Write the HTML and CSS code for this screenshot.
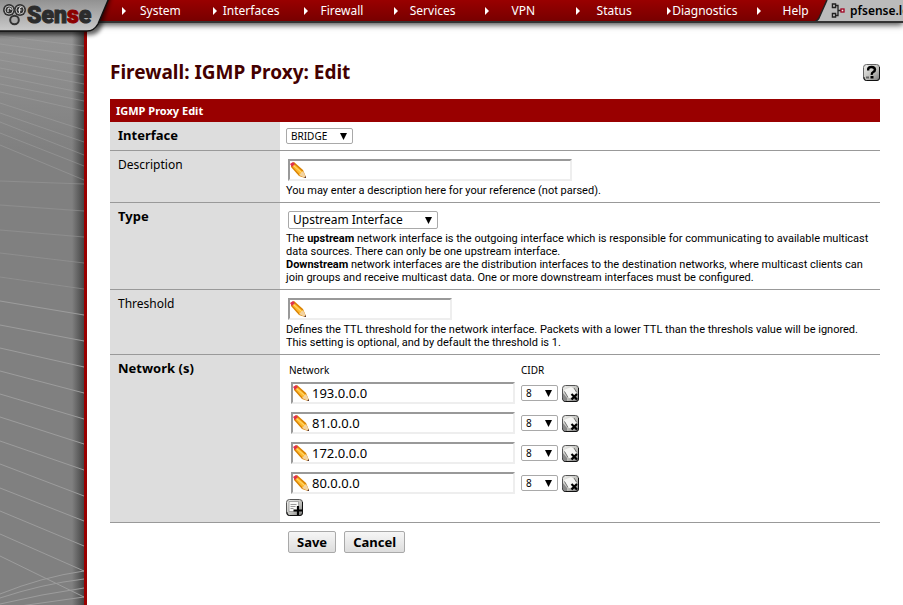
FILE: index.html
```
<!DOCTYPE html>
<html lang="en">

<head>
    <meta charset="UTF-8">
    <meta name="viewport" content="width=device-width, initial-scale=1.0">
    <title>Firewall: IGMP Proxy: Edit</title>
    <link rel="stylesheet" href="styles.css">
</head>

<body>
    <!-- shared icon shapes -->
    <svg class="sprite" aria-hidden="true">
        <defs>
            <linearGradient id="tile" x1="0" y1="0" x2="1" y2="1">
                <stop offset="0" stop-color="#f0f0ee" />
                <stop offset="0.6" stop-color="#bcbcb8" />
                <stop offset="1" stop-color="#777" />
            </linearGradient>
        </defs>
        <symbol id="icon-delete" viewBox="0 0 17 17">
            <rect x="0.5" y="0.5" width="16" height="16" rx="3" fill="url(#tile)" stroke="#555" />
            <path d="M1 13V14q0 2.500 2.500 2.500H14q2.500 0 2.500-2.500V3" fill="none" stroke="#111" />
            <path d="M1 8l4 5v3H3q-2 0-2-2z" fill="#888" />
            <path d="M2 5L9 2l3 1.500 2.500 4.500-6 5H6z" fill="#f6f6f4" />
            <path d="M2.500 6.500l3.500 6M12 3l2.500 4" fill="none" stroke="#666" stroke-width="0.900" />
            <path d="M9.500 9l5.500 5.500M15 9l-5.500 5.500" stroke="#000" stroke-width="2.200" />
        </symbol>
        <symbol id="icon-add" viewBox="0 0 17 17">
            <rect x="0.5" y="0.5" width="16" height="16" rx="3" fill="url(#tile)" stroke="#555" />
            <path d="M1 13V14q0 2.500 2.500 2.500H14q2.500 0 2.500-2.500V3" fill="none" stroke="#111" />
            <path d="M3 2.500h9.500v10H3z" fill="#f8f8f6" stroke="#888" stroke-width="0.700" />
            <path d="M4.500 5.500h6M4.500 7.500h5M4.500 9.500h3" stroke="#999" />
            <path d="M12 7v9M7.500 11.500h9" stroke="#000" stroke-width="2.200" />
        </symbol>
        <symbol id="icon-help" viewBox="0 0 17 17">
            <rect x="0.5" y="0.5" width="16" height="16" rx="3" fill="url(#tile)" stroke="#666" />
            <path d="M1 13V14q0 2.500 2.500 2.500H14q2.500 0 2.500-2.500V3" fill="none" stroke="#111" />
            <path d="M5.200 6.500V5Q5.500 3 8.600 3T12 5.600Q12 7.200 10.300 8T8.800 10.800" fill="none" stroke="#000" stroke-width="2.400" />
            <path d="M7.500 12h3v2.500h-3z" fill="#000" />
            <path d="M3 13.500h3" stroke="#666" stroke-width="2" />
        </symbol>
    </svg>

    <header class="topbar">
        <a class="logo" href="#" aria-label="pfSense">
            <svg width="120" height="44" viewBox="0 0 120 44">
                <defs>
                    <linearGradient id="plate" x1="0" y1="0" x2="0" y2="1">
                        <stop offset="0" stop-color="#8e8e8e" />
                        <stop offset="1" stop-color="#cacaca" />
                    </linearGradient>
                    <filter id="soft" x="-20%" y="-20%" width="140%" height="150%">
                        <feGaussianBlur stdDeviation="2" />
                    </filter>
                </defs>
                <path d="M-6-6H112L101 28Q98 35 90 35H-6z" fill="#000" opacity="0.6" filter="url(#soft)" />
                <path d="M-2-2H109L98 24Q94 31 87 31H-2z" fill="url(#plate)" stroke="#111" stroke-width="1.500" />
                <circle cx="9" cy="10" r="6" fill="#333" />
                <circle cx="20" cy="10" r="6" fill="#333" />
                <g fill="none" stroke="#ddd" stroke-width="1.200">
                    <circle cx="9" cy="10" r="4" stroke-width="0.800" />
                    <circle cx="20" cy="10" r="4" stroke-width="0.800" />
                    <path d="M8 12V9q1.500-2 3 0v1M19.500 13V9q0-2 2-1.500M18 10h3.500" />
                </g>
                <circle cx="14.500" cy="20" r="4.300" fill="#aaa" stroke="#333" stroke-width="2" />
                <text class="logo-text" x="27" y="23">Sen<tspan class="logo-red">s</tspan>e</text>
            </svg>
        </a>
        <nav class="menu">
            <a href="#">System</a>
            <a href="#">Interfaces</a>
            <a href="#">Firewall</a>
            <a href="#">Services</a>
            <a href="#">VPN</a>
            <a href="#">Status</a>
            <a href="#">Diagnostics</a>
            <a href="#">Help</a>
        </nav>
        <div class="host">
            <svg class="host-edge" width="16" height="22" viewBox="0 0 16 22">
                <path d="M16 0H12L4 18Q2 21 0 22H16z" fill="#bbb" />
                <path d="M12 0L4 18Q2 21 0 21.500" fill="none" stroke="#222" stroke-width="1.500" />
            </svg>
            <svg class="host-icon" width="14" height="15" viewBox="0 0 14 15" fill="none">
                <path d="M5 2.500h2v10H5M7 7.500h3" stroke="#222" stroke-width="1.300" />
                <path d="M1.500 1h3v3.500h-3zM1.500 10.500h3V14h-3z" fill="#ddd" stroke="#222" stroke-width="1.500" />
                <rect x="10" y="6" width="3" height="3" fill="#eee" stroke="#a00020" stroke-width="1.300" />
            </svg>
            <span>pfsense.localdomain</span>
        </div>
    </header>

    <div class="page">
        <aside class="sidebar">
            <svg class="rays" viewBox="0 0 84 605" preserveAspectRatio="xMinYMin slice" fill="none" stroke="#9c9c9c" aria-hidden="true">
                <g opacity="0.500">
                    <path d="M0 36L84 46M0 44L84 56M0 52L84 66M0 60L84 75M0 68L84 84M0 76L84 93M0 84L84 101M0 92L84 111M0 103L84 130M0 113L84 142M0 122L84 155M0 133L84 166M0 145L84 180" stroke="#aaa" stroke-width="0.800" />
                    <path d="M0 181L84 184M0 205L84 211M0 230L84 237M0 253L84 263M0 277L84 289" />
                </g>
                <path d="M0 301L84 315M0 325L84 341M0 348L84 367M0 371L84 393M0 394L84 419M0 417L84 444M0 441L84 470M0 464L84 496M0 488L84 521M0 511L84 546M0 534L84 571M0 556L84 597" />
                <path d="M0 594Q42 577 84 571M0 598Q42 584 84 579M0 604Q42 594 84 588M20 606L84 597" />
            </svg>
        </aside>

        <main class="content">
            <div class="title-row">
                <h1>Firewall: IGMP Proxy: Edit</h1>
                <a class="icon" href="#" aria-label="Help"><svg width="17" height="17"><use href="#icon-help" /></svg></a>
            </div>

            <form>
                <table class="form-table">
                    <thead>
                        <tr>
                            <th class="section" colspan="2">IGMP Proxy Edit</th>
                        </tr>
                    </thead>
                    <tbody>
                        <tr>
                            <th class="required"><label for="interface">Interface</label></th>
                            <td>
                                <select id="interface" class="small interface">
                                    <option>BRIDGE</option>
                                    <option>LAN</option>
                                    <option>WAN</option>
                                </select>
                            </td>
                        </tr>
                        <tr>
                            <th><label for="descr">Description</label></th>
                            <td class="tall">
                                <input id="descr" class="field descr" type="text">
                                <p>You may enter a description here for your reference (not parsed).</p>
                            </td>
                        </tr>
                        <tr>
                            <th class="required"><label for="type">Type</label></th>
                            <td class="tall">
                                <select id="type" class="type">
                                    <option>Upstream Interface</option>
                                    <option>Downstream Interface</option>
                                </select>
                                <p>The <strong>upstream</strong> network interface is the outgoing interface which is responsible for communicating to available multicast data sources. There can only be one upstream interface.<br>
                                    <strong>Downstream</strong> network interfaces are the distribution interfaces to the destination networks, where multicast clients can join groups and receive multicast data. One or more downstream interfaces must be configured.</p>
                            </td>
                        </tr>
                        <tr>
                            <th><label for="threshold">Threshold</label></th>
                            <td class="tall">
                                <input id="threshold" class="field threshold" type="text">
                                <p>Defines the TTL threshold for the network interface. Packets with a lower TTL than the threshols value will be ignored.<br>
                                    This setting is optional, and by default the threshold is 1.</p>
                            </td>
                        </tr>
                        <tr>
                            <th class="required">Network (s)</th>
                            <td>
                                <table class="networks">
                                    <thead>
                                        <tr>
                                            <th>Network</th>
                                            <th>CIDR</th>
                                            <th></th>
                                        </tr>
                                    </thead>
                                    <tbody>
                                        <tr>
                                            <td><input class="field address" type="text" value="193.0.0.0" aria-label="Network 1"></td>
                                            <td><select class="small cidr" aria-label="CIDR 1"><option>8</option><option>16</option></select></td>
                                            <td><button class="icon" type="button" aria-label="Remove network 1"><svg width="17" height="17"><use href="#icon-delete" /></svg></button></td>
                                        </tr>
                                        <tr>
                                            <td><input class="field address" type="text" value="81.0.0.0" aria-label="Network 2"></td>
                                            <td><select class="small cidr" aria-label="CIDR 2"><option>8</option><option>16</option></select></td>
                                            <td><button class="icon" type="button" aria-label="Remove network 2"><svg width="17" height="17"><use href="#icon-delete" /></svg></button></td>
                                        </tr>
                                        <tr>
                                            <td><input class="field address" type="text" value="172.0.0.0" aria-label="Network 3"></td>
                                            <td><select class="small cidr" aria-label="CIDR 3"><option>8</option><option>16</option></select></td>
                                            <td><button class="icon" type="button" aria-label="Remove network 3"><svg width="17" height="17"><use href="#icon-delete" /></svg></button></td>
                                        </tr>
                                        <tr>
                                            <td><input class="field address" type="text" value="80.0.0.0" aria-label="Network 4"></td>
                                            <td><select class="small cidr" aria-label="CIDR 4"><option>8</option><option>16</option></select></td>
                                            <td><button class="icon" type="button" aria-label="Remove network 4"><svg width="17" height="17"><use href="#icon-delete" /></svg></button></td>
                                        </tr>
                                    </tbody>
                                </table>
                                <button class="icon" type="button" aria-label="Add network"><svg width="17" height="17"><use href="#icon-add" /></svg></button>
                            </td>
                        </tr>
                    </tbody>
                </table>

                <div class="actions">
                    <button class="btn" type="submit">Save</button>
                    <button class="btn" type="button">Cancel</button>
                </div>
            </form>
        </main>
    </div>
</body>

</html>
```
FILE: styles.css
```
* {
    box-sizing: border-box;
}

body {
    margin: 0;
    min-height: 100vh;
    display: flex;
    flex-direction: column;
    overflow-x: hidden;
    background: #fff;
    color: #000;
    font-family: Tahoma, "Noto Sans", sans-serif;
    font-size: 11px;
    line-height: 13px;
}

.sprite {
    position: absolute;
    width: 0;
    height: 0;
}

/* top bar */
.topbar {
    position: relative;
    z-index: 1;
    display: flex;
    height: 23px;
    padding-left: 115px;
    background: linear-gradient(#990000, #780000);
    border-bottom: 2px solid #333;
    box-shadow: 0 2px 6px rgba(0, 0, 0, 0.7);
}

.logo {
    position: absolute;
    top: 0;
    left: 0;
}

.logo svg {
    display: block;
}

.logo-text {
    font-family: Roboto, "Liberation Sans", sans-serif;
    font-size: 23px;
    font-weight: 900;
    fill: #2c2c2c;
    stroke: #2c2c2c;
}

.logo-red {
    fill: #8c0000;
    stroke: #8c0000;
}

.menu {
    display: flex;
    flex: 1;
}

.menu a {
    flex: 1;
    display: flex;
    align-items: center;
    justify-content: center;
    position: relative;
    color: #fff;
    font-size: 12px;
    text-decoration: none;
}

.menu a::before {
    content: "";
    position: absolute;
    left: 7px;
    top: 7px;
    border: 4px solid transparent;
    border-left-color: #fff;
    border-right-width: 0;
}

.host {
    position: relative;
    display: flex;
    align-items: center;
    width: 88px;
    margin-left: -26px;
    overflow: hidden;
    font-size: 12px;
    font-weight: 600;
    background: linear-gradient(#bbb, #bbb) 16px 0 no-repeat;
    white-space: nowrap;
}

.host svg {
    flex: none;
}

.host-icon {
    margin-right: 5px;
}

/* layout */
.page {
    flex: 1;
    display: flex;
}

.sidebar {
    position: relative;
    flex: none;
    width: 87px;
    margin-top: -23px;
    background: linear-gradient(to right, transparent 72px, #444 84px), linear-gradient(#999, #808080 150px);
    border-right: 3px solid #990000;
}

.rays {
    position: absolute;
    width: 84px;
    height: 100%;
}

.content {
    flex: 1;
    padding: 38px 23px 20px;
}

.title-row {
    display: flex;
    align-items: center;
    justify-content: space-between;
    height: 22px;
    margin-bottom: 16px;
}

h1 {
    margin: 0;
    color: #440000;
    font-size: 19px;
    line-height: 22px;
}

.icon {
    display: block;
    padding: 0;
    border: 0;
    background: none;
}

.icon svg {
    display: block;
}

/* form */
.form-table {
    width: 100%;
    border-collapse: collapse;
}

.form-table > tbody > tr {
    border-bottom: 1px solid #999;
}

.form-table > tbody > tr > th {
    width: 170px;
    padding: 6px 8px;
    background: #ddd;
    font-size: 12px;
    font-weight: normal;
    line-height: 16px;
    text-align: left;
    vertical-align: top;
}

.form-table > tbody > tr > .required {
    padding-top: 5px;
    font-size: 13px;
    font-weight: bold;
}

.form-table > tbody > tr > td {
    padding: 6px;
    vertical-align: top;
}

.form-table > tbody > tr > .tall {
    padding: 8px 6px 5px;
}

.form-table .section {
    height: 23px;
    padding: 0 6px;
    background: #990000;
    color: #fff;
    text-align: left;
}

p {
    margin: 3px 0 0;
    font-family: Tahoma, Roboto, sans-serif;
}

select {
    display: block;
    appearance: none;
    margin: 0;
    padding: 0 4px;
    border: 1px solid #a9a9a9;
    border-radius: 2px;
    background: #fff url("data:image/svg+xml,%3Csvg xmlns='http://www.w3.org/2000/svg' width='7' height='7'%3E%3Cpath d='M0 0h7L3.5 7z'/%3E%3C/svg%3E") right 5px center no-repeat;
    color: #000;
    font-family: inherit;
    font-size: 10px;
}

.small {
    height: 16px;
}

.interface {
    width: 67px;
}

.type {
    width: 150px;
    height: 18px;
    margin-left: 2px;
    font-size: 12px;
    line-height: 16px;
}

.cidr {
    width: 37px;
}

.field {
    display: block;
    height: 22px;
    margin: 0 0 0 2px;
    padding: 0 2px 0 19px;
    border: 2px solid #eee;
    border-top-color: #999;
    border-left-color: #999;
    background: #fff url("data:image/svg+xml,%3Csvg xmlns='http://www.w3.org/2000/svg' width='17' height='17'%3E%3Cpath d='M1 2l3-2 9 8 3 7-1 1-6-2L1 5z' fill='%23d98200'/%3E%3Cpath d='M2 4l2-2 9 8-3 3z' fill='%23ffb92e'/%3E%3Cpath d='M3 3l9 8' stroke='%23ffe07a'/%3E%3Cpath d='M0 2l3-2 2 2-3 3z' fill='%23e0334e'/%3E%3Cpath d='M9 13l4-4 3 6-1 1z' fill='%23f3d3a0'/%3E%3Cpath d='M14 16l2-2v2z' fill='%23533'/%3E%3C/svg%3E") 0 1px no-repeat;
    font-family: inherit;
    font-size: 13px;
}

.descr {
    width: 284px;
}

.threshold {
    width: 164px;
}

.address {
    width: 224px;
}

.networks {
    border-collapse: collapse;
    margin-bottom: 1px;
}

.networks th {
    height: 17px;
    padding: 2px 3px 0;
    font-size: 10px;
    font-weight: normal;
    text-align: left;
}

.networks th + th {
    padding-left: 0;
}

.networks td {
    height: 30px;
    padding: 0 4px 0 0;
}

.networks td:first-child {
    padding: 0 6px 0 3px;
}

.actions {
    display: flex;
    gap: 8px;
    padding: 8px 0 0 178px;
}

.btn {
    height: 22px;
    padding: 0 8px;
    border: 1px solid #a9a9a9;
    border-radius: 2px;
    background: linear-gradient(#f6f6f6, #ddd);
    color: #000;
    font-family: inherit;
    font-size: 13px;
    font-weight: bold;
    line-height: 18px;
}
```
